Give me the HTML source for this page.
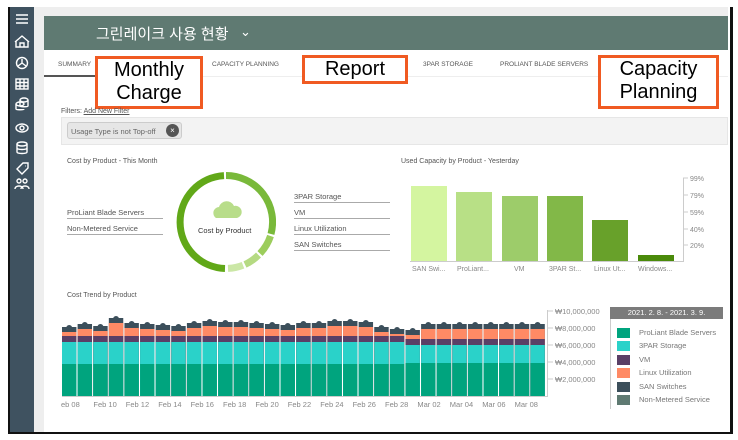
<!DOCTYPE html>
<html><head><meta charset="utf-8">
<style>
*{margin:0;padding:0;box-sizing:border-box}
body{width:738px;height:440px;background:#fff;font-family:"Liberation Sans","Noto Sans CJK KR",sans-serif;position:relative;overflow:hidden}
.a{position:absolute}
.t{font-size:7px;color:#555}
.ob{position:absolute;border:3px solid #f05a22;background:#fff;color:#000;font-size:20px;text-align:center;line-height:23px}
.lbl{position:absolute;font-size:7.5px;color:#555;border-bottom:1px solid #aaa;padding-bottom:1px}
</style></head><body>
<div class="a" style="left:8px;top:7px;width:725px;height:427px;border:2px solid #111;border-top:none;border-left:3px solid #111;border-right:3px solid #111"></div>
<div class="a" style="left:10px;top:7px;width:24px;height:425px;background:#3f5260"></div>
<div class="a" style="left:34px;top:7px;width:10px;height:425px;background:#eee"></div>
<div class="a" style="left:44px;top:7px;width:684px;height:9px;background:#eee"></div>
<svg class="a" style="left:10px;top:9px" width="24" height="190" fill="none" stroke="#fff" stroke-width="1.4">
<path d="M6 6h12M6 10h12M6 14h12"/>
<path d="M5 33l7-6 7 6M6 32v6h12v-6M10 38v-4h4v4"/>
<circle cx="12" cy="54" r="5.5"/><path d="M12 54v-4M12 54l-4 3M12 54l4 3"/>
<rect x="6" y="70" width="12" height="10"/><path d="M6 73.5h12M6 77h12M10 70v10M14 70v10"/>
<ellipse cx="14" cy="91" rx="4" ry="2"/><path d="M10 91v6c0 1 8 1 8 0v-6M6 95v5c0 1 8 1 8 0"/><ellipse cx="10" cy="95" rx="4" ry="2"/>
<ellipse cx="12" cy="119" rx="6" ry="4"/><circle cx="12" cy="119" r="2"/>
<ellipse cx="12" cy="135" rx="5" ry="2"/><path d="M7 135v8c0 2 10 2 10 0v-8M7 139c0 2 10 2 10 0"/>
<path d="M7 160l6-6h5v5l-6 6zM15 157h.5"/>
<circle cx="9" cy="172" r="2"/><circle cx="15" cy="172" r="2"/><path d="M5 180c0-4 8-4 8 0M11 180c0-4 8-4 8 0"/>
</svg>
<div class="a" style="left:44px;top:16px;width:684px;height:34px;background:#5f7a72"></div>
<div class="a" style="left:96px;top:23px;color:#fff;font-size:15px">그린레이크 사용 현황</div>
<div class="a" style="left:240px;top:24px;color:#fff;font-size:13px">⌄</div>
<div class="a t" style="left:58px;top:61px;font-size:6.5px">SUMMARY</div>
<div class="a" style="left:44px;top:75px;width:60px;height:2px;background:#555"></div>
<div class="a" style="left:104px;top:76px;width:624px;height:1px;background:#eee"></div>
<div class="a t" style="left:212px;top:61px;font-size:6.5px">CAPACITY PLANNING</div>
<div class="a t" style="left:423px;top:61px;font-size:6.5px">3PAR STORAGE</div>
<div class="a t" style="left:500px;top:61px;font-size:6.5px">PROLIANT BLADE SERVERS</div>
<div class="ob" style="left:95px;top:56px;width:108px;height:53px">Monthly<br>Charge</div>
<div class="ob" style="left:302px;top:55px;width:106px;height:29px">Report</div>
<div class="ob" style="left:598px;top:55px;width:121px;height:54px">Capacity<br>Planning</div>
<div class="a t" style="left:61px;top:108px">Filters: <u>Add New Filter</u></div>
<div class="a" style="left:61px;top:117px;width:667px;height:28px;background:#f3f3f3;border:1px solid #e6e6e6"></div>
<div class="a" style="left:67px;top:122px;width:115px;height:17px;background:#e6e6e6;border:1px solid #ccc;border-radius:3px;font-size:7.5px;color:#666;padding:4px 0 0 3px">Usage Type is not Top-off</div>
<div class="a" style="left:166px;top:124px;width:13px;height:13px;border-radius:50%;background:#555;color:#fff;font-size:8px;text-align:center;line-height:13px">×</div>
<div class="a t" style="left:67px;top:158px">Cost by Product - This Month</div>
<div class="lbl" style="left:67px;top:208px;width:96px">ProLiant Blade Servers</div>
<div class="lbl" style="left:67px;top:224px;width:96px">Non-Metered Service</div>
<div class="lbl" style="left:294px;top:192px;width:96px">3PAR Storage</div>
<div class="lbl" style="left:294px;top:208px;width:96px">VM</div>
<div class="lbl" style="left:294px;top:224px;width:96px">Linux Utilization</div>
<div class="lbl" style="left:294px;top:240px;width:96px">SAN Switches</div>
<svg class="a" style="left:176px;top:172px" width="100" height="100">
<g fill="none" stroke-width="7" transform="translate(50,50)">
<path d="M0-46.5A46.5 46.5 0 0 1 45 12" stroke="#79b93a"/>
<path d="M44.5 14A46.5 46.5 0 0 1 34 31.5" stroke="#9ccd5c"/>
<path d="M32.5 33A46.5 46.5 0 0 1 19 42.5" stroke="#b5da82"/>
<path d="M17 43.2A46.5 46.5 0 0 1 2 46.4" stroke="#cbe7a6"/>
<path d="M-1 46.5A46.5 46.5 0 0 1 -2 -46.4" stroke="#61a818"/>
</g>
<path d="M40 46a6 6 0 0 1 3-11a8 8 0 0 1 15-1a6 6 0 0 1 3 12z" fill="#b8dd8a"/>
</svg>
<div class="a" style="left:198px;top:226px;font-size:7.5px;color:#333">Cost by Product</div>
<div class="a t" style="left:401px;top:158px">Used Capacity by Product - Yesterday</div>
<svg class="a" style="left:400px;top:170px" width="330" height="110" font-family="Liberation Sans" font-size="7" fill="#888">
<g stroke="#ccc"><path d="M10 91.5H284M283.5 91V8M283 8h5M283 25h5M283 42h5M283 59h5M283 75h5"/></g>
<text x="290" y="11">99%</text><text x="290" y="28">79%</text><text x="290" y="45">59%</text><text x="290" y="62">40%</text><text x="290" y="78">20%</text>
<rect x="11" y="16" width="36" height="75" fill="#d4f5a0"/>
<rect x="56" y="22" width="36" height="69" fill="#b8e086"/>
<rect x="102" y="26" width="36" height="65" fill="#9dcc6a"/>
<rect x="147" y="26" width="36" height="65" fill="#82b848"/>
<rect x="192" y="50" width="36" height="41" fill="#68a12a"/>
<rect x="238" y="85" width="36" height="6" fill="#4a8a0a"/>
<text x="12" y="101">SAN Swi...</text><text x="57" y="101">ProLiant...</text><text x="114" y="101">VM</text><text x="149" y="101">3PAR St...</text><text x="194" y="101">Linux Ut...</text><text x="238" y="101">Windows...</text>
</svg>
<div class="a t" style="left:67px;top:292px">Cost Trend by Product</div>
<svg id="tr" class="a" style="left:0;top:300px" width="738" height="120" font-family="Liberation Sans" font-size="7.5" fill="#888"></svg>
<div class="a" style="left:610px;top:307px;width:113px;height:12px;background:#7b7b7b;color:#fff;font-size:7.5px;text-align:center;line-height:12px">2021. 2. 8. - 2021. 3. 9.</div>
<div class="a" style="left:610px;top:319px;width:1px;height:90px;background:#ccc"></div>
<div class="a" style="left:617px;top:326px;font-size:7.5px;color:#777;line-height:13.4px">
<div><span style="display:inline-block;width:13px;height:10px;background:#00a47e;vertical-align:middle;margin-right:9px"></span>ProLiant Blade Servers</div>
<div><span style="display:inline-block;width:13px;height:10px;background:#2ad2c9;vertical-align:middle;margin-right:9px"></span>3PAR Storage</div>
<div><span style="display:inline-block;width:13px;height:10px;background:#5a3f66;vertical-align:middle;margin-right:9px"></span>VM</div>
<div><span style="display:inline-block;width:13px;height:10px;background:#ff8a65;vertical-align:middle;margin-right:9px"></span>Linux Utilization</div>
<div><span style="display:inline-block;width:13px;height:10px;background:#3c4f5b;vertical-align:middle;margin-right:9px"></span>SAN Switches</div>
<div><span style="display:inline-block;width:13px;height:10px;background:#5f7a72;vertical-align:middle;margin-right:9px"></span>Non-Metered Service</div>
</div>
<script>
var s='',n=31,x0=62,w=484/31;
var orT=[332,329,331,323,328,329,330,331,328,326,327,327,328,329,330,328,328,326,326,327,332,334,335,329,329,329,329,329,329,329,329];
for(var i=0;i<n;i++){var x=x0+i*w,m=i>=22,ww=w-1.2;var o=orT[i]-300,d=o-5;
var gt=m?63:64,tt=m?45:42,pt=m?39:36;
s+='<rect x="'+x+'" y="'+d+'" width="'+ww+'" height="'+(96-d)+'" fill="#3c4f5b"/>';
s+='<rect x="'+x+'" y="'+o+'" width="'+ww+'" height="'+(96-o)+'" fill="#ff8a65"/>';
s+='<rect x="'+x+'" y="'+pt+'" width="'+ww+'" height="'+(96-pt)+'" fill="#5a3f66"/>';
s+='<rect x="'+x+'" y="'+tt+'" width="'+ww+'" height="'+(96-tt)+'" fill="#2ad2c9"/>';
s+='<rect x="'+x+'" y="'+gt+'" width="'+ww+'" height="'+(96-gt)+'" fill="#00a47e"/>';
s+='<circle cx="'+(x+ww/2)+'" cy="'+(d+1)+'" r="3" fill="#3c4f5b"/>';}
s+='<path d="M62 96.5H547M547.5 97V10M547 11h6M547 28h6M547 45h6M547 62h6M547 79h6" stroke="#ccc" fill="none"/>';
var yl=['₩10,000,000','₩8,000,000','₩6,000,000','₩4,000,000','₩2,000,000'];
for(var k=0;k<5;k++)s+='<text x="555" y="'+(14+k*17)+'">'+yl[k]+'</text>';
var xl=['eb 08','Feb 10','Feb 12','Feb 14','Feb 16','Feb 18','Feb 20','Feb 22','Feb 24','Feb 26','Feb 28','Mar 02','Mar 04','Mar 06','Mar 08'];
for(k=0;k<15;k++)s+='<text x="'+(61+k*32.4)+'" y="107">'+xl[k]+'</text>';
document.getElementById('tr').innerHTML=s;
</script>
</body></html>
